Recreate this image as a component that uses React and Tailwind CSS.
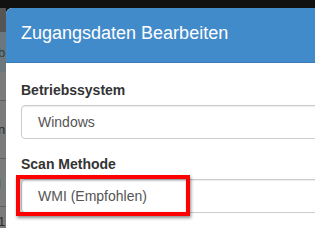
export default function App() {
  return (
    <div className="relative w-[315px] h-[228px] overflow-hidden bg-[#111111] font-['Liberation_Sans',Arial,sans-serif]">
      <div className="flex h-full pt-[8px]">
        {/* dimmed page behind the modal */}
        <div className="w-[6px] flex flex-col shrink-0 text-[13px] leading-none overflow-hidden">
          <div className="h-[24px] bg-[#555555]"></div>
          <div className="h-[40px] bg-[#6b777d] text-[#2f3f47] pt-[14px] pl-0">
            <span className="-ml-[2px]">b</span>
          </div>
          <div className="h-[30px] bg-[#7b7b7b] border-b border-[#5f5f5f]"></div>
          <div className="h-[58px] bg-[#7b7b7b] border-b border-[#5f5f5f] text-[#2a2a2a] pt-[22px]">
            <span className="-ml-[2px]">n</span>
          </div>
          <div className="h-[48px] bg-[#7b7b7b] border-b border-[#5f5f5f] text-[#1f3f6b] pt-[18px]">
            <span className="-ml-[2px]">l</span>
          </div>
          <div className="flex-1 bg-[#7b7b7b] text-[#2a2a2a] pt-[8px]">
            <span className="-ml-[2px]">1</span>
          </div>
        </div>

        {/* modal */}
        <div className="flex-1 flex flex-col bg-white rounded-tl-[6px] overflow-hidden">
          <div className="h-[55px] shrink-0 bg-[#428bca] border-b border-[#3a7cb8] pl-[15px] pt-[12px]">
            <h4 className="text-white text-[18px] leading-[26px] whitespace-nowrap">Zugangsdaten Bearbeiten</h4>
          </div>
          <div className="pl-[15px] pt-[17px]">
            <div className="mb-[15px]">
              <label className="block text-[#333333] text-[14px] leading-[20px] font-bold mb-[5px]">Betriebssystem</label>
              <div className="h-[34px] w-[320px] border border-[#cccccc] rounded-[4px] shadow-[inset_0_1px_1px_rgba(0,0,0,0.075)] flex items-center pl-[16px] text-[14px] text-[#555555]">
                Windows
              </div>
            </div>
            <div>
              <label className="block text-[#333333] text-[14px] leading-[20px] font-bold mb-[5px]">Scan Methode</label>
              <div className="h-[34px] w-[320px] border border-[#cccccc] rounded-[4px] shadow-[inset_0_1px_1px_rgba(0,0,0,0.075)] flex items-center pl-[16px] text-[14px] text-[#555555]">
                WMI (Empfohlen)
              </div>
            </div>
          </div>
        </div>
      </div>

      {/* annotation highlight */}
      <div className="absolute left-[16px] top-[175px] w-[174px] h-[41px] border-[4px] border-[#ff0000] shadow-[1px_2px_3px_rgba(0,0,0,0.45),inset_1px_1px_3px_rgba(0,0,0,0.35)]"></div>
    </div>
  );
}
